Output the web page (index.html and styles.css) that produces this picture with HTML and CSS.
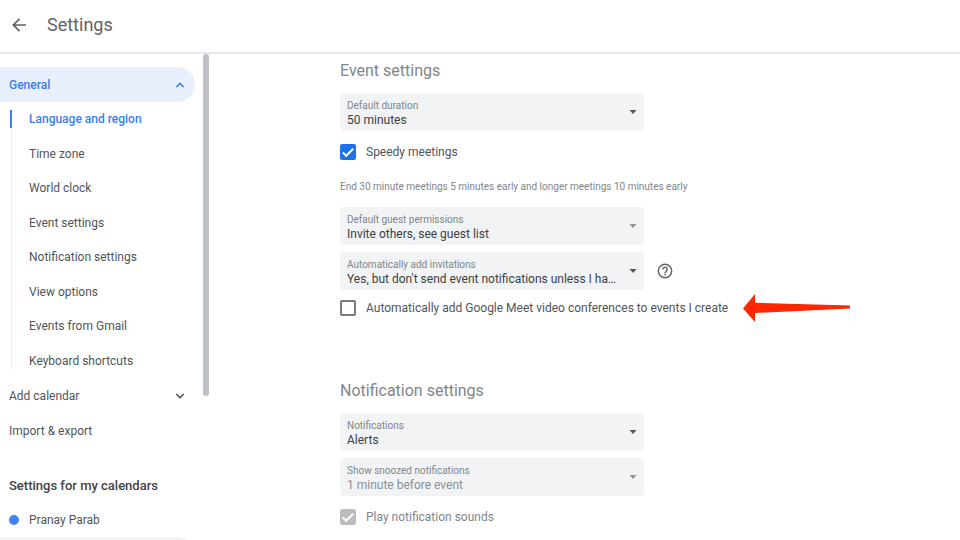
FILE: index.html
```html
<!DOCTYPE html>
<html lang="en">
<head>
<meta charset="utf-8">
<title>Settings</title>
<link rel="stylesheet" href="styles.css">
</head>
<body>
<header class="topbar">
  <button class="back" type="button" aria-label="Back">
    <svg width="16" height="16" viewBox="0 0 16 16" fill="none" stroke="currentColor" stroke-width="1.7"><path d="M15 8H2.400M8.500 1.800 2.300 8 8.500 14.200"/></svg>
  </button>
  <h1 class="title">Settings</h1>
</header>
<div class="layout">
  <nav class="sidebar">
    <a class="item group-open" href="#general">General
      <svg class="chevron" width="10" height="6" viewBox="0 0 10 6" fill="none" stroke="currentColor" stroke-width="1.6"><path d="M1.300 5 5 1.400 8.700 5"/></svg>
    </a>
    <ul class="sublist">
      <li><a class="subitem current" href="#language">Language and region</a></li>
      <li><a class="subitem" href="#timezone">Time zone</a></li>
      <li><a class="subitem" href="#clock">World clock</a></li>
      <li><a class="subitem" href="#events">Event settings</a></li>
      <li><a class="subitem" href="#notifications">Notification settings</a></li>
      <li><a class="subitem" href="#view">View options</a></li>
      <li><a class="subitem" href="#gmail">Events from Gmail</a></li>
      <li><a class="subitem" href="#shortcuts">Keyboard shortcuts</a></li>
    </ul>
    <a class="item" href="#add">Add calendar
      <svg class="chevron" width="10" height="6" viewBox="0 0 10 6" fill="none" stroke="currentColor" stroke-width="1.6"><path d="M1.300 1 5 4.600 8.700 1"/></svg>
    </a>
    <a class="item" href="#import">Import &amp; export</a>
    <h2 class="nav-heading">Settings for my calendars</h2>
    <a class="item calendar" href="#pranay"><span class="dot"></span>Pranay Parab</a>
    <div class="next-pill"></div>
  </nav>
  <div class="scroll"><div class="thumb"></div></div>
  <main class="content">
    <section class="section" id="events">
      <h2 class="heading">Event settings</h2>
      <div class="field">
        <label for="duration">Default duration</label>
        <select id="duration"><option>50 minutes</option></select>
        <svg class="caret" width="8" height="4" viewBox="0 0 8 4"><path d="M.5 0h7L4 4z" fill="currentColor"/></svg>
      </div>
      <div class="check-row">
        <input type="checkbox" id="speedy" checked><label for="speedy">Speedy meetings</label>
      </div>
      <p class="hint">End 30 minute meetings 5 minutes early and longer meetings 10 minutes early</p>
      <div class="field field-soft">
        <label for="guests">Default guest permissions</label>
        <select id="guests"><option>Invite others, see guest list</option></select>
        <svg class="caret" width="8" height="4" viewBox="0 0 8 4"><path d="M.5 0h7L4 4z" fill="currentColor"/></svg>
      </div>
      <div class="field-row">
        <div class="field">
          <label for="invites">Automatically add invitations</label>
          <select id="invites"><option>Yes, but don't send event notifications unless I ha…</option></select>
          <svg class="caret" width="8" height="4" viewBox="0 0 8 4"><path d="M.5 0h7L4 4z" fill="currentColor"/></svg>
        </div>
        <button class="help" type="button" aria-label="Help">
          <svg width="16" height="16" viewBox="0 0 16 16" fill="none" stroke="currentColor" stroke-width="1.4"><circle cx="8" cy="8" r="6.700"/><path d="M5.800 6.500a2.200 2.200 0 1 1 3.700 1.600C8.700 8.700 8 9 8 10.200"/><path d="M8 11v1.500"/></svg>
        </button>
      </div>
      <div class="check-row meet">
        <input type="checkbox" id="meet"><label for="meet">Automatically add Google Meet video conferences to events I create</label>
        <svg class="pointer" width="108" height="28" viewBox="0 0 108 28"><path d="M0 14.500 12 0v8.800L107 11.500v3L12 19v9z" fill="#ff2600"/></svg>
      </div>
    </section>
    <section class="section" id="notifications">
      <h2 class="heading">Notification settings</h2>
      <div class="field">
        <label for="alerts">Notifications</label>
        <select id="alerts"><option>Alerts</option></select>
        <svg class="caret" width="8" height="4" viewBox="0 0 8 4"><path d="M.5 0h7L4 4z" fill="currentColor"/></svg>
      </div>
      <div class="field field-soft">
        <label for="snoozed">Show snoozed notifications</label>
        <select id="snoozed" disabled><option>1 minute before event</option></select>
        <svg class="caret" width="8" height="4" viewBox="0 0 8 4"><path d="M.5 0h7L4 4z" fill="currentColor"/></svg>
      </div>
      <div class="check-row">
        <input type="checkbox" id="sounds" checked disabled><label for="sounds">Play notification sounds</label>
      </div>
    </section>
  </main>
</div>
</body>
</html>
```
FILE: styles.css
```css
* { box-sizing: border-box; margin: 0; }

body {
  display: flex;
  flex-direction: column;
  height: 100vh;
  overflow: hidden;
  background: #fff;
  color: #50555a;
  font: 12px/20px Roboto, "Liberation Sans", sans-serif;
}

button { padding: 0; border: 0; background: none; color: #5f6368; display: flex; }
a { color: inherit; text-decoration: none; }

.topbar {
  display: flex;
  flex: none;
  align-items: center;
  gap: 20px;
  padding: 11px 11px 13px;
  border-bottom: 2px solid #e9eaeb;
}
.title { font: 400 18px/28px "Google Sans", Roboto, sans-serif; color: #5f6368; }

.layout { display: flex; flex: 1; min-height: 0; }

.sidebar { flex: none; width: 203px; padding: 13px 8px 0 0; overflow: hidden; }
.item {
  display: flex;
  align-items: center;
  justify-content: space-between;
  height: 35px;
  padding: 0 10px 0 9px;
}
.group-open {
  border-radius: 0 18px 18px 0;
  background: #e8f0fe;
  color: #3b7eee;
  font-weight: 500;
}
.sublist {
  display: grid;
  grid-auto-rows: 1fr;
  min-height: 276px;
  margin-left: 10px;
  padding: 0;
  list-style: none;
  background: linear-gradient(#e8eaf2, #e8eaf2) 1px 9px / 1px 258px no-repeat;
}
.sublist li { display: flex; align-items: center; }
.subitem { padding-left: 19px; line-height: 18px; }
.current { padding-left: 17px; border-left: 2px solid #3b7eee; color: #3b7eee; font-weight: 500; }
.nav-heading { margin: 28px 0 6px 9px; font: 500 13px/20px "Google Sans", Roboto, sans-serif; color: #3f4348; }
.calendar { justify-content: flex-start; gap: 10px; }
.dot { width: 10px; height: 10px; border-radius: 50%; background: #4285f4; }
.next-pill { height: 35px; border-radius: 0 18px 18px 0; background: #f1f3f4; }

.scroll { flex: none; width: 6px; }
.thumb { height: 342px; border-radius: 3px; background: #bdc1c6; }

.content { flex: 1; min-width: 0; padding: 7px 0 0 131px; }
.section + .section { margin-top: 61px; }
.heading { margin-bottom: 12px; font: 400 16px/20px "Google Sans", Roboto, sans-serif; color: #80868b; }

.field {
  position: relative;
  width: 304px;
  height: 38px;
  padding: 6px 7px 4px;
  border-radius: 4px;
  background: #f1f3f4;
  color: #3c4043;
}
.field + .field, .field-row { margin-top: 7px; }
.field label { display: block; font-size: 10px; line-height: 14px; color: #80868b; }
.field select {
  display: block;
  width: 100%;
  height: 14px;
  padding: 0;
  border: 0;
  appearance: none;
  background: none;
  color: #3c4043;
  font: 12px/14px Roboto, sans-serif;
  opacity: 1;
}
.field select:disabled { color: #8b9095; }
.caret { position: absolute; right: 7px; top: 17px; color: #50555a; }
.field-soft .caret { color: #8f9499; }
.field-row { display: flex; align-items: center; gap: 13px; }

.check-row { display: flex; align-items: center; gap: 10px; height: 24px; margin-top: 9px; }
.meet { margin-top: 6px; }
.check-row input {
  flex: none;
  width: 16px;
  height: 16px;
  margin: 0;
  appearance: none;
  border: 2px solid #777b80;
  border-radius: 2px;
}
.check-row input:checked {
  border: 0;
  background: #1a73e8 url("data:image/svg+xml,%3Csvg xmlns='http://www.w3.org/2000/svg' viewBox='0 0 16 16'%3E%3Cpath d='M2.800 8.500 6.200 11.800 13.200 4.800' fill='none' stroke='white' stroke-width='2'/%3E%3C/svg%3E");
}
.check-row input:disabled { background-color: #bdbdbd; }
.check-row input:disabled + label { color: #80868b; }
.pointer { flex: none; margin-left: 5px; }
.hint { margin: 15px 0 12px; font-size: 10px; line-height: 16px; color: #80868b; }
```
